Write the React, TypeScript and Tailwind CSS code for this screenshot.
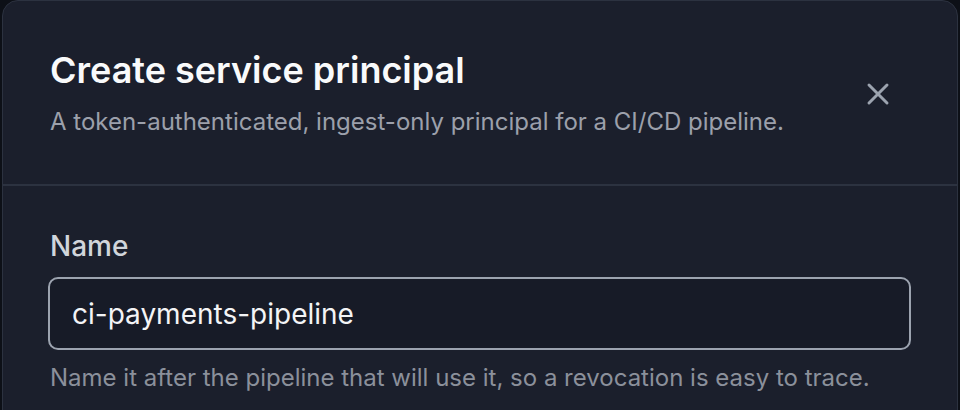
import React, { useState } from "react";
import { X } from "lucide-react";

const App: React.FC = () => {
  const [name, setName] = useState("ci-payments-pipeline");

  return (
    <div
      className="h-[410px] w-full overflow-hidden bg-[#0d1017] px-[2px]"
      style={{ fontFamily: "Inter, 'Noto Sans', sans-serif" }}
    >
      <div className="h-[440px] rounded-t-2xl border border-[#2c3240] bg-[#1b1f2c]">
        {/* Header */}
        <div className="flex items-start justify-between px-[47px] pt-[49px] pb-[46px]">
          <div>
            <h2 className="text-[36px] leading-[40px] font-semibold text-[#f9fafb]">
              Create service principal
            </h2>
            <p className="mt-[16px] text-[24px] leading-[32px] text-[#9ca0ab]">
              A token-authenticated, ingest-only principal for a CI/CD pipeline.
            </p>
          </div>
          <button className="mt-[26px] mr-[14px] text-[#9ca3af]">
            <X size={36} strokeWidth={2} />
          </button>
        </div>

        <div className="h-[2px] bg-[#2c3240]" />

        {/* Body */}
        <div className="px-[45px] pt-[42px]">
          <label className="block px-[2px] text-[28px] leading-[36px] font-medium text-[#d1d5db]">
            Name
          </label>
          <input
            value={name}
            onChange={(e) => setName(e.target.value)}
            className="mt-[13px] block h-[73px] w-[863px] rounded-[10px] border-2 border-[#9ca3af] bg-[#171b27] px-[22px] text-[28px] text-[#f3f4f6] outline-none"
          />
          <p className="mt-[12px] px-[2px] text-[24px] leading-[32px] text-[#8b909b]">
            Name it after the pipeline that will use it, so a revocation is easy
            to trace.
          </p>
        </div>
      </div>
    </div>
  );
};

export default App;
